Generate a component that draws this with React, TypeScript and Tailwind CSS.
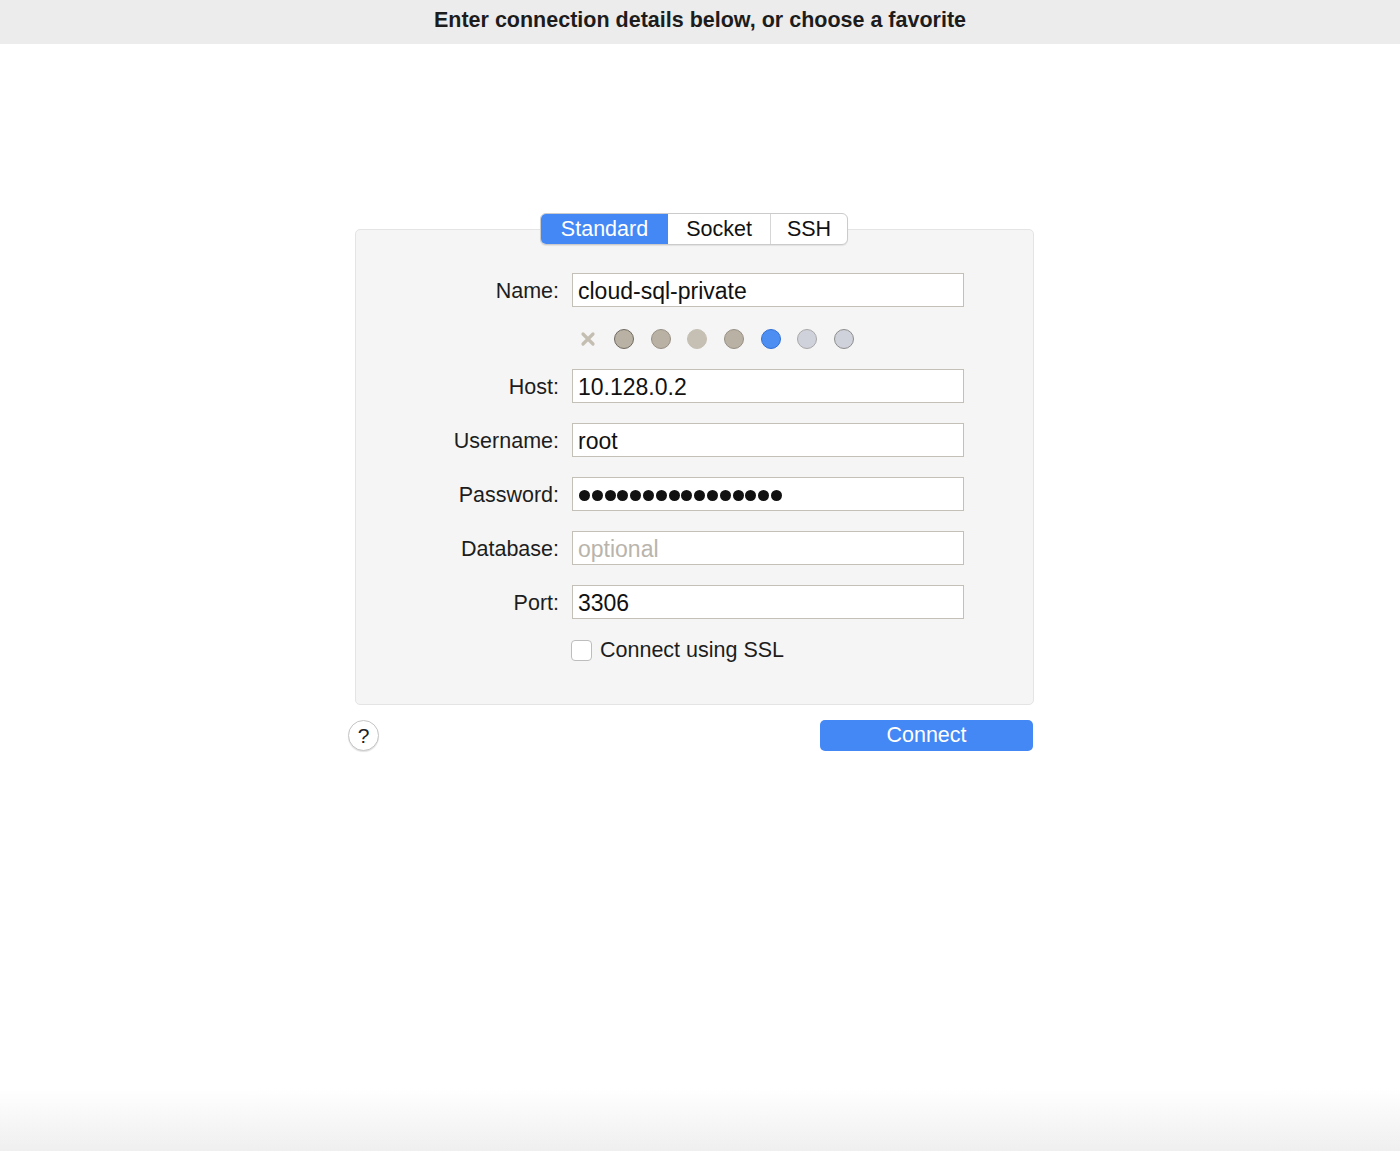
const FONT = { fontFamily: '"Liberation Sans", Arial, sans-serif' };

const SWATCHES = [
  { fill: "#b9b1a4", ring: "#6f6960" },
  { fill: "#b9b1a4", ring: "#978f84" },
  { fill: "#c6bfb3", ring: "#c6bfb3" },
  { fill: "#b9b1a4", ring: "#978f84" },
  { fill: "#4d8ef2", ring: "#2f6fd6" },
  { fill: "#cfd2da", ring: "#a8a8a8" },
  { fill: "#cfd2da", ring: "#8d8d8d" },
];

function Field({ label, value, placeholder }: { label: string; value?: string; placeholder?: string }) {
  return (
    <div className="flex h-[34px] items-center">
      <div className="w-[203px] pt-[2px] text-right text-[21.5px] leading-[30px] text-[#1d1d1d]">{label}</div>
      <div className="ml-[13px] flex h-[34px] w-[392px] items-center border border-[#c4c0b8] bg-white px-[5px] pt-[2px] text-[23px] text-[#111]">
        {value ? value : <span className="text-[#b9b4ac]">{placeholder}</span>}
      </div>
    </div>
  );
}

export default function App() {
  return (
    <div className="flex min-h-[1151px] flex-col bg-white" style={FONT}>
      {/* title bar */}
      <div className="flex h-[44px] items-center justify-center bg-[#ececec] pb-[3px] text-[21.5px] font-bold text-[#1c1c1c]">
        Enter connection details below, or choose a favorite
      </div>

      <div className="ml-[348px] mt-[169px] w-[686px]">
        {/* tabs */}
        <div className="relative z-10 ml-[192px] flex h-[32px] w-[308px] overflow-hidden rounded-[6px] border border-[#cbcbcb] bg-white text-[21.5px] shadow-[0_1px_1px_rgba(0,0,0,0.08)]">
          <div className="flex w-[127px] items-center justify-center bg-[#4388f4] text-white">Standard</div>
          <div className="flex w-[103px] items-center justify-center border-r border-[#d6d6d6] text-[#111]">Socket</div>
          <div className="flex flex-1 items-center justify-center text-[#111]">SSH</div>
        </div>

        {/* panel */}
        <div className="ml-[7px] -mt-[16px] w-[679px] rounded-[5px] border border-[#e4e4e4] bg-[#f5f5f5] pb-[43px] pt-[43px]">
          <Field label="Name:" value="cloud-sql-private" />

          <div className="ml-[216px] mb-[20px] mt-[22px] flex h-[20px] items-center">
            <div className="flex w-[32px] justify-center">
              <svg width="16" height="16" viewBox="0 0 16 16">
                <path d="M3 3 L13 13 M13 3 L3 13" stroke="#c4bdb2" strokeWidth="3.2" strokeLinecap="round" />
              </svg>
            </div>
            <div className="flex gap-[16.7px] pl-[10px]">
              {SWATCHES.map((s, i) => (
                <div
                  key={i}
                  className="h-[20px] w-[20px] rounded-full border-[1.5px]"
                  style={{ backgroundColor: s.fill, borderColor: s.ring }}
                />
              ))}
            </div>
          </div>

          <div className="flex flex-col gap-[20px]">
            <Field label="Host:" value="10.128.0.2" />
            <Field label="Username:" value="root" />
            <div className="flex h-[34px] items-center">
              <div className="w-[203px] pt-[2px] text-right text-[21.5px] leading-[30px] text-[#1d1d1d]">Password:</div>
              <div className="ml-[13px] flex h-[34px] w-[392px] items-center gap-[1.8px] border border-[#c4c0b8] bg-white px-[6px] pt-[2px]">
                {Array.from({ length: 16 }).map((_, i) => (
                  <span key={i} className="h-[11px] w-[11px] rounded-full bg-[#111]" />
                ))}
              </div>
            </div>
            <Field label="Database:" placeholder="optional" />
            <Field label="Port:" value="3306" />
          </div>

          <label className="ml-[215px] mt-[21px] flex h-[21px] items-center gap-[8px] text-[21.5px] leading-none text-[#1d1d1d]">
            <span className="h-[21px] w-[21px] rounded-[4px] border border-[#bdbdbd] bg-white" />
            Connect using SSL
          </label>
        </div>

        {/* bottom buttons */}
        <div className="mt-[15px] flex items-center justify-between">
          <button className="flex h-[31px] w-[31px] items-center justify-center rounded-full border border-[#c6c6c6] bg-white text-[21px] text-[#222] shadow-[0_1px_1px_rgba(0,0,0,0.12)]">
            ?
          </button>
          <button className="mr-[1px] flex h-[31px] w-[213px] items-center justify-center rounded-[5px] bg-[#4388f4] text-[21.5px] text-white">
            Connect
          </button>
        </div>
      </div>

      <div className="flex-1" />
      <div className="h-[62px] bg-gradient-to-b from-white to-[#efefef]" />
    </div>
  );
}
